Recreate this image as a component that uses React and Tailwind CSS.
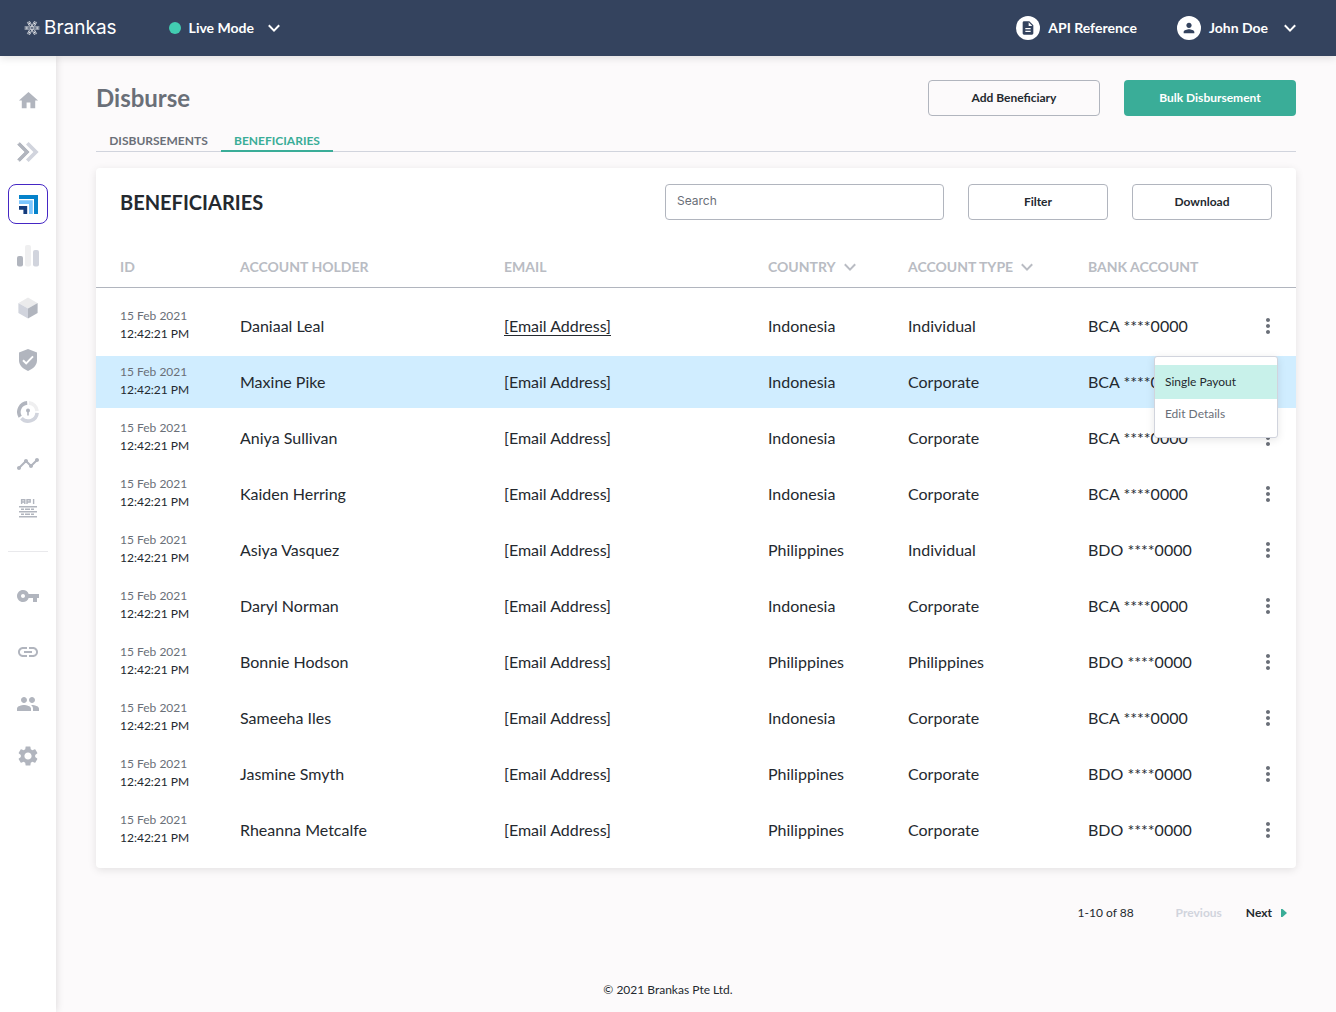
// App.jsx
import { MdHome, MdVpnKey, MdLink, MdPeople, MdSettings, MdPerson, MdMoreVert, MdTimeline, MdDescription } from 'react-icons/md';

const beneficiaries = [
    { name: 'Daniaal Leal', country: 'Indonesia', type: 'Individual', account: 'BCA ****0000', link: true },
    { name: 'Maxine Pike', country: 'Indonesia', type: 'Corporate', account: 'BCA ****0000', selected: true },
    { name: 'Aniya Sullivan', country: 'Indonesia', type: 'Corporate', account: 'BCA ****0000' },
    { name: 'Kaiden Herring', country: 'Indonesia', type: 'Corporate', account: 'BCA ****0000' },
    { name: 'Asiya Vasquez', country: 'Philippines', type: 'Individual', account: 'BDO ****0000' },
    { name: 'Daryl Norman', country: 'Indonesia', type: 'Corporate', account: 'BCA ****0000' },
    { name: 'Bonnie Hodson', country: 'Philippines', type: 'Philippines', account: 'BDO ****0000' },
    { name: 'Sameeha Iles', country: 'Indonesia', type: 'Corporate', account: 'BCA ****0000' },
    { name: 'Jasmine Smyth', country: 'Philippines', type: 'Corporate', account: 'BDO ****0000' },
    { name: 'Rheanna Metcalfe', country: 'Philippines', type: 'Corporate', account: 'BDO ****0000' },
];

function Chevron() {
    return (
        <svg className="w-3 h-3" viewBox="0 0 12 12" fill="none" stroke="currentColor" strokeWidth="2" aria-hidden="true">
            <path d="M0.8 3.2 6 8.6l5.2-5.4" />
        </svg>
    );
}

function LogoMark() {
    return (
        <svg className="w-4 h-4" viewBox="0 0 16 16" fill="none" stroke="#fff" strokeWidth="0.6" aria-hidden="true">
            {[0, 60, 120, 180, 240, 300].map((angle) => (
                <g key={angle} transform={`rotate(${angle} 8 8)`}>
                    <path d="M15.4 6.8H11L9 8l2 1.200h4.400M15.400 8H11.400M13.200 6.800v2.400" />
                </g>
            ))}
        </svg>
    );
}

function PayIcon() {
    return (
        <svg className="w-[22px] h-5" viewBox="0 0 22 20" aria-hidden="true">
            <path fill="#d1d4dd" d="M9 2.6 11.6 0 21.6 10 11.6 20 9 17.4l7.4-7.4z" />
            <path fill="#b1b5be" stroke="#fff" strokeWidth="1" d="M-.2 2.7 2.8-.4 13.2 10 2.8 20.4l-3-3.1L7.1 10z" />
        </svg>
    );
}

function DisburseIcon() {
    return (
        <svg className="w-[19px] h-[19px]" viewBox="0 0 19 19" aria-hidden="true">
            <path fill="#0582ca" d="M0 0h19v19h-4V4H0z" />
            <path fill="#7cc6fe" d="M0 5.2h13.8V19H10V9H0z" />
            <path fill="#143c7d" d="M0 11h8.2v8H4.4v-4.2H0z" />
        </svg>
    );
}

function ChartIcon() {
    return (
        <svg className="w-[22px] h-[22px]" viewBox="0 0 22 22" aria-hidden="true">
            <rect x="0" y="11" width="6" height="10.5" rx="2" fill="#b1b5be" />
            <rect x="8" y="0" width="6" height="21.5" rx="2" fill="#efeff0" />
            <rect x="16" y="5" width="6" height="16.5" rx="2" fill="#d1d4dd" />
        </svg>
    );
}

function CubeIcon() {
    return (
        <svg className="w-5 h-[22px]" viewBox="0 0 20 22" aria-hidden="true">
            <path fill="#ebebec" d="M10 .6 19.4 6 10 11.4.6 6z" />
            <path fill="#d1d4dd" d="M.4 6 10 11.4V21.6L.4 16z" />
            <path fill="#b1b5be" d="M19.6 6 10 11.4V21.6l9.6-5.6z" />
        </svg>
    );
}

function ShieldIcon() {
    return (
        <svg className="w-[18px] h-[22px]" viewBox="0 0 18 22" aria-hidden="true">
            <path fill="#b1b5be" d="M9 0 18 3.4v8.2c0 4.6-3.8 8.3-9 10.4-5.2-2.1-9-5.8-9-10.4V3.4z" />
            <path fill="none" stroke="#fff" strokeWidth="2" d="m4 11.2 3.2 3.2 6.8-7" />
        </svg>
    );
}

function GaugeIcon() {
    return (
        <svg className="w-[22px] h-[22px]" viewBox="0 0 22 22" fill="none" strokeWidth="3.6" aria-hidden="true">
            <path stroke="#b1b5be" d="M10.2 1.9A9.1 9.1 0 0 0 3.2 15.7" />
            <path stroke="#efeff0" d="M12 1.9A9.1 9.1 0 0 1 20.1 10" />
            <path stroke="#d1d4dd" d="M20.1 11.8A9.1 9.1 0 0 1 4.4 17.2" />
            <circle cx="11" cy="9.6" r="2" fill="#b1b5be" />
            <path stroke="#b1b5be" strokeWidth="1.6" d="M11 9v5.5" />
        </svg>
    );
}

function ApiIcon() {
    return (
        <svg className="w-[18px] h-5" viewBox="0 0 18 20" fill="none" stroke="#b1b5be" strokeWidth="1.4" aria-hidden="true">
            <path d="M2.6 6V1.7h3.2V6M2.6 4h3.2M8 6V1.7h3.2V4H8M14.6 1v5" />
            <path d="M0 8.7h18M0 13.7h18M0 18.7h18" />
            <path strokeDasharray="3 1 5 1" d="M2 11.2h14M2 16.2h14" />
        </svg>
    );
}

function NavItem({ label, active, children }) {
    return (
        <a
            href="#"
            aria-label={label}
            className={
                active
                    ? 'flex items-center justify-center w-10 h-10 rounded-lg border border-[#4527c4]'
                    : 'flex items-center justify-center w-10 h-10'
            }
        >
            {children}
        </a>
    );
}

function Sidebar() {
    return (
        <nav className="relative w-14 shrink-0 bg-white pt-6 flex flex-col items-center text-[#b1b5be] shadow-[0_0_8px_rgba(0,0,0,0.14)]">
            <div className="flex flex-col gap-3">
                <NavItem label="Home"><MdHome size={23} /></NavItem>
                <NavItem label="Pay"><PayIcon /></NavItem>
                <NavItem label="Disburse" active><DisburseIcon /></NavItem>
                <NavItem label="Statements"><ChartIcon /></NavItem>
                <NavItem label="Products"><CubeIcon /></NavItem>
                <NavItem label="Verification"><ShieldIcon /></NavItem>
                <NavItem label="Balance"><GaugeIcon /></NavItem>
                <NavItem label="Activity"><MdTimeline size={24} /></NavItem>
            </div>
            <div className="mt-1"><NavItem label="API"><ApiIcon /></NavItem></div>
            <hr className="w-10 mt-[23px] mb-6 border-[#e9e9ec]" />
            <NavItem label="Keys"><MdVpnKey size={24} /></NavItem>
            <div className="flex flex-col gap-3 mt-4">
                <NavItem label="Links"><MdLink size={24} /></NavItem>
                <NavItem label="Team"><MdPeople size={24} /></NavItem>
                <NavItem label="Settings"><MdSettings size={24} /></NavItem>
            </div>
        </nav>
    );
}

function Header() {
    return (
        <header className="relative z-10 h-14 bg-[#34435e] text-white text-sm font-bold pl-6 pr-10 flex items-center shadow-[0_2px_8px_rgba(0,0,0,0.12)]">
            <a href="#" className="flex items-center gap-1 font-['Inter'] text-[19px] font-normal">
                <LogoMark />
                Brankas
            </a>
            <button className="flex items-center ml-13">
                <span className="w-3 h-3 mr-2 rounded-full bg-[#42cdb1]" />
                Live Mode
                <span className="ml-[14px]"><Chevron /></span>
            </button>
            <a href="#" className="flex items-center gap-2 ml-auto">
                <span className="w-6 h-6 rounded-full bg-white text-[#34435e] flex items-center justify-center">
                    <MdDescription size={16} />
                </span>
                API Reference
            </a>
            <button className="flex items-center gap-2 ml-10">
                <span className="w-6 h-6 rounded-full bg-white text-[#34435e] flex items-center justify-center">
                    <MdPerson size={16} />
                </span>
                John Doe
                <span className="ml-2"><Chevron /></span>
            </button>
        </header>
    );
}

function RowMenu() {
    return (
        <div className="absolute z-10 top-0 right-[18px] w-31 py-2 bg-white border border-[#d1d4dd] rounded-[3px] shadow-[0_2px_8px_rgba(0,0,0,0.1)] text-xs">
            <button className="block w-full h-[34px] px-[10px] text-left bg-[#c8f1ea] text-[#24292f]">Single Payout</button>
            <button className="block w-full h-[30px] px-[10px] text-left text-[#6a6f78]">Edit Details</button>
        </div>
    );
}

function BeneficiaryTable() {
    const th = 'h-11 pt-[2px] border-b border-[#b1b5be] font-bold';

    return (
        <table className="w-full mt-6 table-fixed border-separate border-spacing-0 text-left">
            <thead className="text-sm text-[#b9bcc3]">
                <tr>
                    <th className={`${th} w-36 pl-6`}>ID</th>
                    <th className={`${th} w-66`}>ACCOUNT HOLDER</th>
                    <th className={`${th} w-66`}>EMAIL</th>
                    <th className={`${th} w-35`}>
                        <button className="flex items-center gap-2">COUNTRY <Chevron /></button>
                    </th>
                    <th className={`${th} w-45`}>
                        <button className="flex items-center gap-2">ACCOUNT TYPE <Chevron /></button>
                    </th>
                    <th className={th}>BANK ACCOUNT</th>
                    <th className={`${th} w-14`} aria-label="Actions" />
                </tr>
            </thead>
            <tbody className="text-base text-[#24292f] before:block before:h-3">
                {beneficiaries.map((row) => (
                    <tr
                        key={row.name}
                        className={
                            row.selected
                                ? '*:h-14 *:border-b-4 *:border-transparent *:bg-clip-padding *:bg-[#d0edff]'
                                : '*:h-14 *:border-b-4 *:border-transparent'
                        }
                    >
                        <td className="pl-6 pb-[2px] text-xs leading-[18px]">
                            <div className="text-[#6a6f78]">15 Feb 2021</div>
                            <div>12:42:21 PM</div>
                        </td>
                        <td>{row.name}</td>
                        <td>
                            {row.link ? <a href="#" className="border-b border-[#24292f]">[Email Address]</a> : '[Email Address]'}
                        </td>
                        <td>{row.country}</td>
                        <td>{row.type}</td>
                        <td>{row.account}</td>
                        <td className="relative">
                            <button className="block ml-4 text-[#6a6f78]" aria-label="Row actions"><MdMoreVert size={24} /></button>
                            {row.selected && <RowMenu />}
                        </td>
                    </tr>
                ))}
            </tbody>
        </table>
    );
}

export default function App() {
    const outlined = 'h-9 rounded border border-[#b1b5be] text-xs font-bold text-[#24292f]';
    const tab = 'h-6 -mb-px leading-[26px] text-center';

    return (
        <div className="min-h-screen flex flex-col bg-[#fcfafb] font-['Lato',sans-serif] text-[#24292f]">
            <Header />
            <div className="flex grow">
                <Sidebar />
                <main className="grow flex flex-col px-10 pt-6">
                    {/* Title and actions */}
                    <div className="flex items-center gap-6">
                        <h1 className="grow text-2xl font-bold text-[#6a6f78]">Disburse</h1>
                        <button className={`${outlined} w-43`}>Add Beneficiary</button>
                        <button className="w-43 h-9 rounded bg-[#3aad98] text-xs font-bold text-white">Bulk Disbursement</button>
                    </div>

                    {/* Tabs */}
                    <div className="flex mt-3 border-b border-[#d1d4dd] text-xs font-bold text-[#6a6f78]">
                        <a href="#" className={`${tab} w-[125px]`}>DISBURSEMENTS</a>
                        <a href="#" className={`${tab} w-28 border-b-2 border-[#3aad98] text-[#3aad98]`}>BENEFICIARIES</a>
                    </div>

                    {/* Beneficiaries card */}
                    <section className="mt-4 pt-4 pb-2 rounded bg-white shadow-[0_2px_8px_rgba(0,0,0,0.1)]">
                        <div className="flex items-center gap-6 px-6">
                            <h2 className="grow text-xl font-bold">BENEFICIARIES</h2>
                            <input
                                type="search"
                                aria-label="Search"
                                placeholder="Search"
                                className="w-[279px] h-9 px-[11px] pb-1 rounded border border-[#b1b5be] font-['Inter'] text-xs placeholder:text-[#6a6f78]"
                            />
                            <button className={`${outlined} w-35`}>Filter</button>
                            <button className={`${outlined} w-35`}>Download</button>
                        </div>
                        <BeneficiaryTable />
                    </section>

                    {/* Pagination */}
                    <div className="flex items-center justify-end mt-9 pt-px pr-[9px] text-xs leading-4">
                        <span>1-10 of 88</span>
                        <button className="ml-[42px] font-bold text-[#d1d4dd]" disabled>Previous</button>
                        <button className="flex items-center ml-6 font-bold">
                            Next
                            <svg className="w-[6px] h-2 ml-[9px]" viewBox="0 0 6 8" fill="#3aad98" aria-hidden="true">
                                <path d="M0 0h1.5L6 4 1.5 8H0z" />
                            </svg>
                        </button>
                    </div>

                    <footer className="mt-auto pt-8 pb-[14px] pr-14 text-center text-xs">© 2021 Brankas Pte Ltd.</footer>
                </main>
            </div>
        </div>
    );
}
